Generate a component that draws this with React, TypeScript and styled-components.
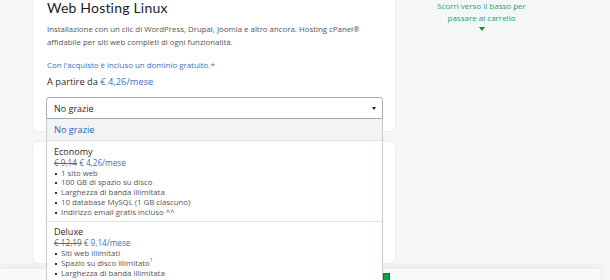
import React from "react";
import styled, { createGlobalStyle } from "styled-components";

const Global = createGlobalStyle`
  html, body { margin: 0; padding: 0; }
  body {
    background: #f5f6f7;
    font-family: "Open Sans", "Liberation Sans", sans-serif;
    width: 610px;
    height: 280px;
    overflow: hidden;
  }
`;

const Page = styled.div`
  position: relative;
  display: flex;
  width: 610px;
  height: 280px;
  overflow: hidden;
`;

const LeftCol = styled.div`
  display: flex;
  flex-direction: column;
  gap: 11px;
  width: 362px;
  padding-left: 33px;
  margin-top: -20px;
`;

const Card = styled.div<{ $h: number }>`
  position: relative;
  background: #fff;
  border-radius: 5px;
  box-shadow: 0 0 0 1px #eceef0;
  height: ${(p) => p.$h}px;
  padding: 0 14px;
  box-sizing: border-box;
`;

const Title = styled.h2`
  margin: 18px 0 0;
  font-family: Lato, "Open Sans", sans-serif;
  font-size: 14px;
  font-weight: 400;
  color: #1c1c1c;
  line-height: 19px;
  letter-spacing: 0.2px;
`;

const Desc = styled.p`
  margin: 6px 0 0;
  font-size: 7.85px;
  line-height: 12.5px;
  color: #555;
`;

const Promo = styled.p`
  margin: 11px 0 0;
  font-size: 7.9px;
  line-height: 12px;
  color: #3b72b8;
`;

const PriceLine = styled.p`
  margin: 4px 0 0;
  font-size: 9.3px;
  line-height: 14px;
  color: #2b2b2b;
`;

const Blue = styled.span`
  color: #3b72b8;
`;

const SelectWrap = styled.div`
  position: relative;
  margin-top: 8px;
  width: 337px;
  margin-left: -1px;
`;

const SelectBox = styled.div`
  display: flex;
  align-items: center;
  justify-content: space-between;
  height: 22px;
  box-sizing: border-box;
  border: 1px solid #a9aeb3;
  border-radius: 3px 3px 0 0;
  padding: 0 6px 0 7px;
  font-size: 9px;
  color: #2b2b2b;
  background: #fff;
`;

const Caret = styled.span`
  width: 0;
  height: 0;
  border-left: 2.5px solid transparent;
  border-right: 2.5px solid transparent;
  border-top: 3px solid #222;
`;

const Menu = styled.div`
  position: absolute;
  top: 22px;
  left: 0;
  right: 0;
  height: 200px;
  background: #fff;
  border: 1px solid #c7cbcf;
  border-top: none;
  box-sizing: border-box;
  z-index: 5;
`;

const OptionPlain = styled.div`
  height: 21px;
  display: flex;
  align-items: center;
  padding-left: 7px;
  background: #f1f3f5;
  color: #2a65ae;
  font-size: 9.2px;
  border-bottom: 1px solid #dfe2e5;
`;

const Option = styled.div`
  padding: 4.5px 7px 3.5px;
  border-bottom: 1px solid #dfe2e5;
`;

const OptName = styled.div`
  font-size: 9px;
  line-height: 11px;
  color: #1f1f1f;
`;

const OptPrice = styled.div`
  font-size: 8.2px;
  line-height: 12px;
  color: #555;
`;

const Strike = styled.span`
  text-decoration: line-through;
  color: #666;
`;

const Bullets = styled.ul`
  margin: 0;
  padding: 0 0 0 7px;
  list-style: none;
`;

const Bullet = styled.li`
  position: relative;
  font-size: 7.8px;
  line-height: 9.75px;
  color: #555;
  &::before {
    content: "";
    position: absolute;
    left: -6px;
    top: 4px;
    width: 2px;
    height: 2px;
    background: #333;
  }
`;

const Sup = styled.sup`
  font-size: 5px;
  line-height: 0;
`;

const RightCol = styled.div`
  flex: 1;
  display: flex;
  justify-content: center;
  padding-right: 42px;
`;

const Hint = styled.div`
  display: flex;
  flex-direction: column;
  align-items: center;
  width: 120px;
  color: #2e9e5b;
  font-size: 8px;
  line-height: 11.5px;
  text-align: center;
`;

const HintArrow = styled.span`
  margin-top: 4px;
  width: 0;
  height: 0;
  border-left: 3px solid transparent;
  border-right: 3px solid transparent;
  border-top: 4px solid #1b8a4a;
`;

const Footer = styled.div`
  position: absolute;
  left: 0;
  right: 10px;
  bottom: -20px;
  height: 31px;
  background: #f9fafa;
  box-shadow: 0 -3px 6px rgba(0, 0, 0, 0.05);
  z-index: 1;
`;

const GreenBtn = styled.div`
  position: absolute;
  left: 383px;
  top: 4px;
  width: 7px;
  height: 12px;
  background: #10a33c;
  border: 1px solid #0b7a2c;
  box-sizing: border-box;
`;

const features1 = [
  "1 sito web",
  "100 GB di spazio su disco",
  "Larghezza di banda illimitata",
  "10 database MySQL (1 GB ciascuno)",
  "Indirizzo email gratis incluso ^^",
];

export default function App() {
  return (
    <>
      <Global />
      <Page>
        <LeftCol>
          <Card $h={151}>
            <Title>Web Hosting Linux</Title>
            <Desc>
              Installazione con un clic di WordPress, Drupal, Joomla e altro ancora. Hosting cPanel®
              <br />
              affidabile per siti web completi di ogni funzionalità.
            </Desc>
            <Promo>Con l'acquisto è incluso un dominio gratuito.*</Promo>
            <PriceLine>
              A partire da <Blue>€ 4,26/mese</Blue>
            </PriceLine>
            <SelectWrap>
              <SelectBox>
                <span>No grazie</span>
                <Caret />
              </SelectBox>
              <Menu>
                <OptionPlain>No grazie</OptionPlain>
                <Option>
                  <OptName>Economy</OptName>
                  <OptPrice>
                    <Strike>€ 9,14</Strike> <Blue>€ 4,26/mese</Blue>
                  </OptPrice>
                  <Bullets>
                    {features1.map((f) => (
                      <Bullet key={f}>{f}</Bullet>
                    ))}
                  </Bullets>
                </Option>
                <Option>
                  <OptName>Deluxe</OptName>
                  <OptPrice>
                    <Strike>€ 12,19</Strike> <Blue>€ 9,14/mese</Blue>
                  </OptPrice>
                  <Bullets>
                    <Bullet>Siti web illimitati</Bullet>
                    <Bullet>
                      Spazio su disco illimitato<Sup>1</Sup>
                    </Bullet>
                    <Bullet>Larghezza di banda illimitata</Bullet>
                  </Bullets>
                </Option>
              </Menu>
            </SelectWrap>
          </Card>
          <Card $h={121} />
        </LeftCol>
        <RightCol>
          <Hint>
            <span>Scorri verso il basso per</span>
            <span>passare al carrello</span>
            <HintArrow />
          </Hint>
        </RightCol>
        <Footer>
          <GreenBtn />
        </Footer>
      </Page>
    </>
  );
}
